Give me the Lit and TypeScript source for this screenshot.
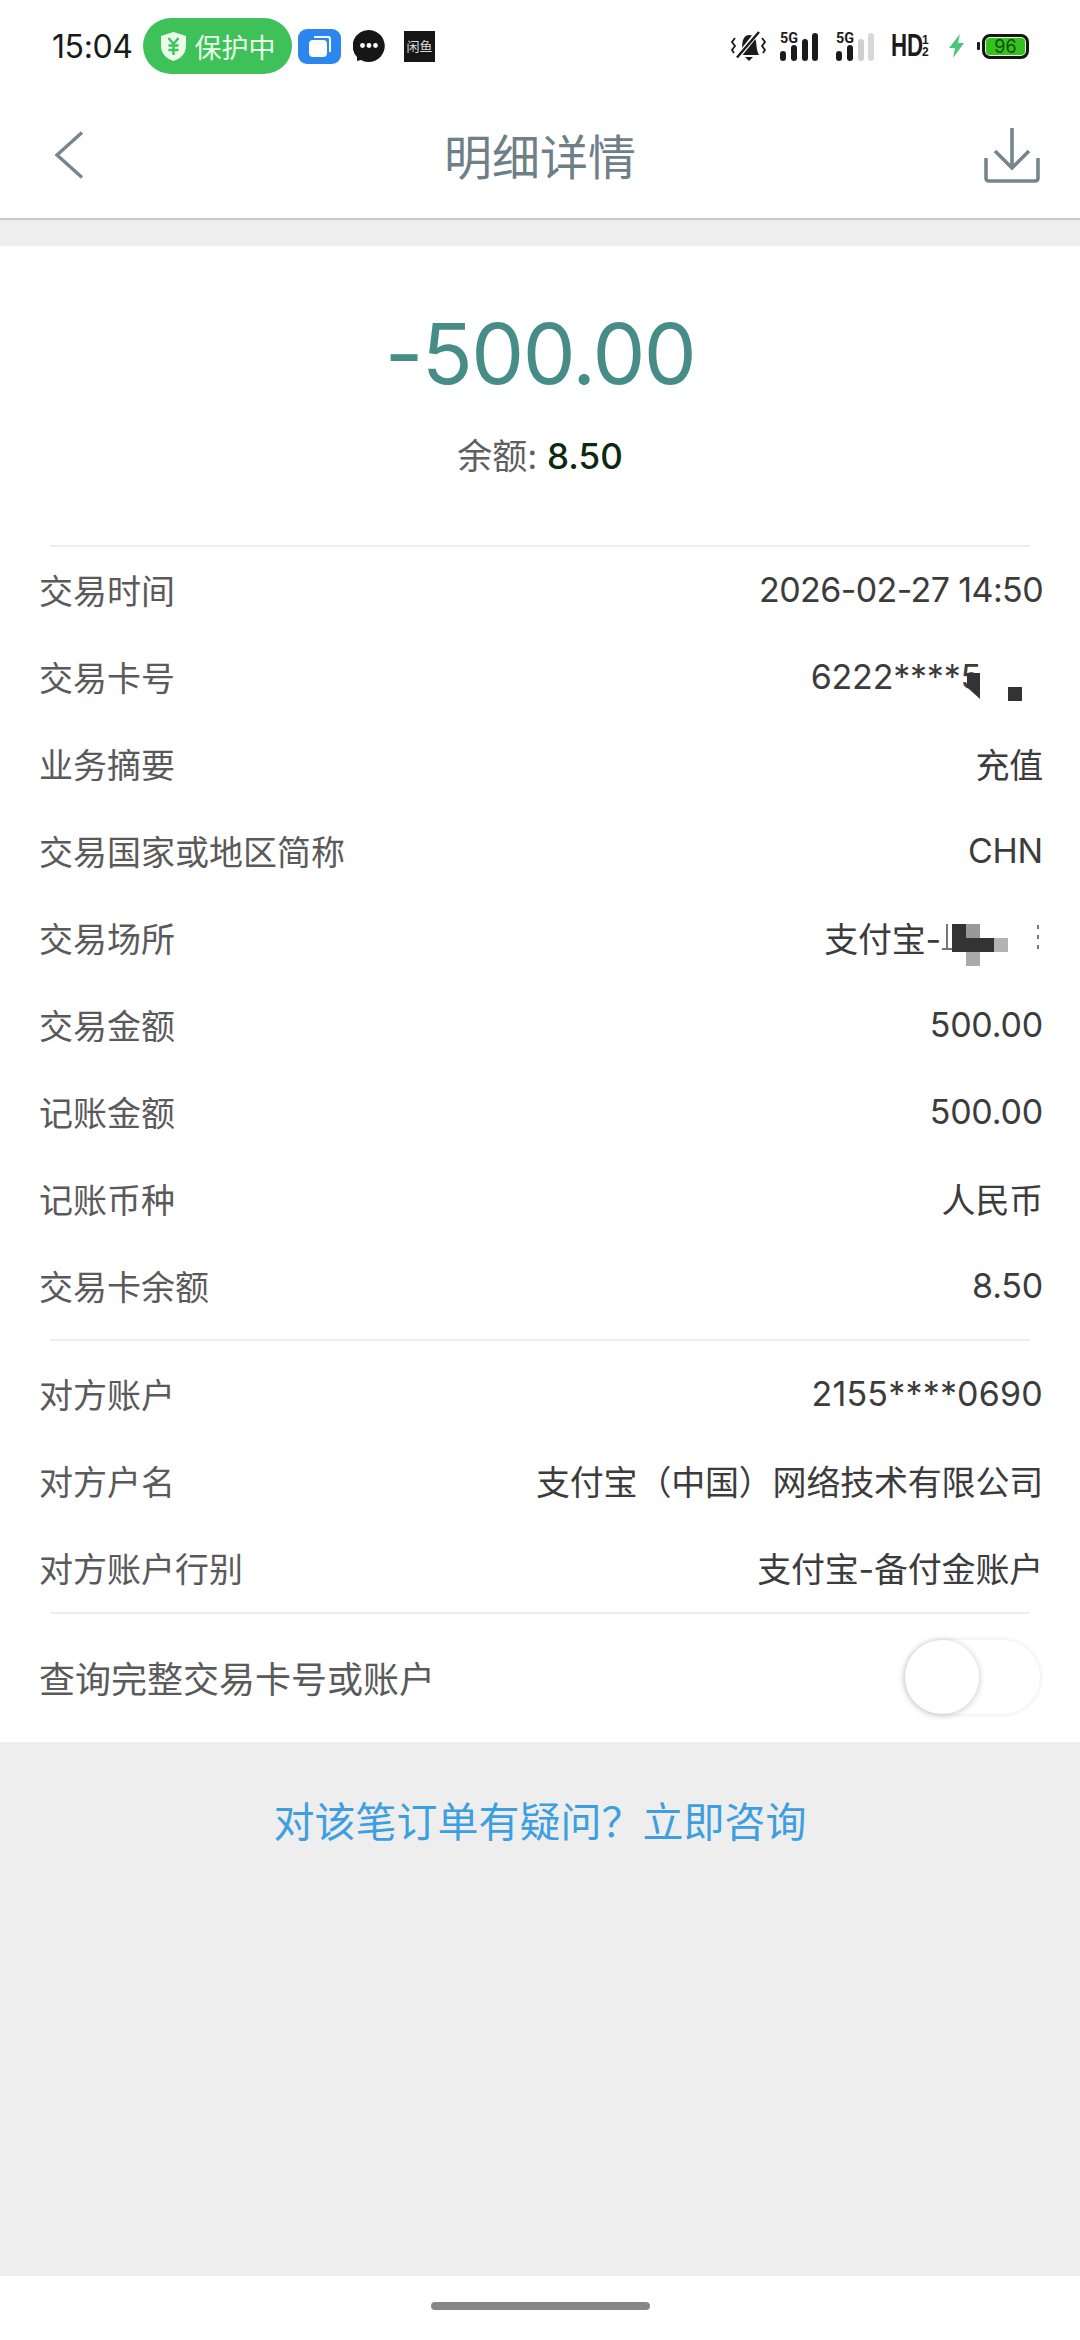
import { LitElement, html, css, svg } from "lit";
import { customElement } from "lit/decorators.js";

const rowsA: [string, string, string?][] = [
  ["交易时间", "2026-02-27 14:50", "date"],
  ["交易卡号", "6222****5", "card"],
  ["业务摘要", "充值"],
  ["交易国家或地区简称", "CHN"],
  ["交易场所", "支付宝-", "place"],
  ["交易金额", "500.00"],
  ["记账金额", "500.00"],
  ["记账币种", "人民币"],
  ["交易卡余额", "8.50"],
];
const rowsB: [string, string, string?][] = [
  ["对方账户", "2155****0690", "acct"],
  ["对方户名", "支付宝（中国）网络技术有限公司"],
  ["对方账户行别", "支付宝-备付金账户"],
];

const signal = (active: number, w: number) => svg`
  <svg class="sig" viewBox="0 0 40 30" width="${w}" height="30">
    <text x="1" y="12" font-size="14" font-weight="700" textLength="18" lengthAdjust="spacingAndGlyphs" font-family="Roboto, sans-serif" fill="#1b1b1b">5G</text>
    <rect x="1" y="20" width="6" height="10" rx="3" fill="#1b1b1b"/>
    <rect x="12" y="14" width="6" height="16" rx="3" fill="#1b1b1b"/>
    <rect x="23" y="8" width="6" height="22" rx="3" fill="${active > 2 ? "#1b1b1b" : "#cfcfcf"}"/>
    <rect x="33" y="2" width="6" height="28" rx="3" fill="${active > 3 ? "#1b1b1b" : "#d8d8d8"}"/>
  </svg>`;

@customElement("app-root")
export class AppRoot extends LitElement {
  static styles = css`
    :host {
      display: flex;
      flex-direction: column;
      width: 1080px;
      height: 2340px;
      background: #fff;
      font-family: Inter, "Noto Sans CJK SC", sans-serif;
      overflow: hidden;
    }
    .status {
      height: 92px;
      flex: none;
      display: flex;
      align-items: center;
      padding: 0 51px 0 52px;
      box-sizing: border-box;
    }
    .time { font-size: 32px; color: #1a1a1a; width: 91px; flex: none; white-space: nowrap; letter-spacing: -0.4px; }
    .pill {
      width: 149px; height: 56px; border-radius: 28px; background: #3fc15a; flex: none;
      display: flex; align-items: center; justify-content: center; gap: 8px;
      color: #e9fbe9; font-size: 27px;
    }
    .blue { margin-left: 6px; display: block; flex: none; }
    .msg { margin-left: 12px; display: block; flex: none; }
    .xy {
      margin-left: 19px; width: 31px; height: 31px; background: #161616; color: #ddd; flex: none;
      font-size: 13px; line-height: 31px; text-align: center; white-space: nowrap; overflow: hidden;
    }
    .spacer { flex: 1; }
    .right { display: flex; align-items: center; }
    .right svg { display: block; flex: none; }
    .hd {
      display: flex; align-items: center; width: 41px; color: #1b1b1b; margin-left: 16px; flex: none;
      font-family: "Liberation Sans", sans-serif; font-weight: 700;
    }
    .hd b { font-size: 31px; font-weight: 700; transform: scaleX(.72); transform-origin: left; width: 31px; display: block; }
    .frac { display: flex; flex-direction: column; font-size: 12px; line-height: 12px; align-items: center; }
    .batt { display: flex; align-items: center; gap: 2px; margin-left: 12px; }
    .nub { width: 3px; height: 8px; background: #1b1b1b; border-radius: 1px; }
    .cell {
      border: 3px solid #161616; border-radius: 8px; background: #35c21f;
      color: #124c12; font-size: 18px; text-align: center; box-sizing: content-box;
      width: 41px; height: 19px; line-height: 19px; box-shadow: inset 0 0 0 1px #e8ffe0;
    }
    .nav {
      height: 128px; flex: none; display: flex; align-items: center; justify-content: space-between;
      padding: 0 40px 0 53px; border-bottom: 2px solid #c2cecd; box-sizing: border-box;
      position: relative;
    }
    .nav .title { position: absolute; left: 0; right: 0; text-align: center; font-size: 48px; color: #6f7f87; padding-bottom: 3px; }
    .nav svg { display: block; position: relative; }
    .gapbar { height: 26px; flex: none; background: #eeeeee; }
    .hero { height: 299px; flex: none; display: flex; flex-direction: column; align-items: center; box-sizing: border-box; padding-top: 53px; }
    .amount { font-size: 84px; line-height: 110px; color: #468d87; font-weight: 400; letter-spacing: -1.6px; }
    .bal { margin-top: 24px; font-size: 35px; line-height: 46px; color: #5f5f5f; }
    .bal b { font-weight: 500; color: #0c2a10; }
    .div { height: 2px; margin: 0 50px; background: #ededed; flex: none; }
    .list { flex: none; }
    .a { margin-bottom: 9px; }
    .b { margin-top: 10px; }
    .row {
      height: 87px; display: flex; justify-content: space-between; align-items: center; box-sizing: border-box;
      padding: 0 37px 3px 39px; font-size: 34px; position: relative;
    }
    .row .l { color: #5a5a5a; }
    .row .v { color: #3c3c3c; letter-spacing: -0.2px; }
    .row .date { letter-spacing: -0.6px; }
    .row .acct { letter-spacing: 0.2px; }
    .row .card { padding-right: 62px; }
    .row .place { padding-right: 102px; }
    .block { position: absolute; background: #333; }
    .tri { clip-path: polygon(0 0, 100% 0, 100% 100%, 0 55%); }
    .dots { background: repeating-linear-gradient(#777 0 4px, transparent 4px 10px); }
    .toggleRow {
      height: 128px; flex: none; display: flex; justify-content: space-between; align-items: center;
      padding: 0 40px 3px 39px; font-size: 36px; color: #5a5a5a; box-sizing: border-box;
    }
    .toggle {
      width: 135px; height: 74px; position: relative; box-sizing: border-box;
      border-radius: 38px; box-shadow: 0 0 4px 1px rgba(0,0,0,.08);
    }
    .knob {
      position: absolute; left: 0; top: 0; width: 74px; height: 74px; border-radius: 50%;
      background: #fff; box-shadow: 0 1px 6px 1px rgba(0,0,0,.18);
    }
    .grayArea {
      flex: 1; background: #eeeeee; text-align: center; padding-top: 51px;
      font-size: 41px; line-height: 58px; color: #3d9fdf;
    }
    .home { height: 64px; flex: none; display: flex; justify-content: center; align-items: center; }
    .home i { display: block; width: 219px; height: 8px; border-radius: 4px; background: #878787; margin-top: -4px; }
  `;

  private row(l: string, v: string, k?: string) {
    return html`<div class="row">
      <span class="l">${l}</span>
      <span class="v ${k ?? ""}">${v}</span>
      ${k === "card"
        ? html`<i class="block tri" style="left:967px;top:39px;width:13px;height:26px"></i>
            <i class="block" style="left:1008px;top:53px;width:14px;height:14px"></i>`
        : ""}
      ${k === "place"
        ? html`<i class="block" style="left:946px;top:29px;width:2px;height:26px;background:#777"></i>
            <i class="block" style="left:942px;top:53px;width:10px;height:2px;background:#777"></i>
            <i class="block" style="left:952px;top:29px;width:14px;height:28px"></i>
            <i class="block" style="left:966px;top:29px;width:14px;height:14px;background:#999"></i>
            <i class="block" style="left:966px;top:43px;width:28px;height:14px"></i>
            <i class="block" style="left:994px;top:43px;width:14px;height:14px;background:#b3b3b3"></i>
            <i class="block" style="left:966px;top:57px;width:14px;height:14px;background:#aaa"></i>
            <i class="block dots" style="left:1037px;top:30px;width:2px;height:26px"></i>`
        : ""}
    </div>`;
  }

  render() {
    return html`
      <div class="status">
        <span class="time">15:04</span>
        <div class="pill">
          <svg width="27" height="31" viewBox="0 0 27 31">
            <path d="M13.5 1 L26 5 V15 C26 23 20 28 13.5 30 C7 28 1 23 1 15 V5 Z" fill="#eafbea"/>
            <path d="M8.5 7 L13.5 13 L18.5 7 M8.5 14.5 H18.5 M8.5 19 H18.5 M13.5 13 V24" fill="none" stroke="#3fc15a" stroke-width="2.4"/>
          </svg>
          <span>保护中</span>
        </div>
        <svg class="blue" width="43" height="35" viewBox="0 0 43 35">
          <rect width="43" height="35" rx="9" fill="#2b87ee"/>
          <path d="M16 8 H30 Q32 8 32 10 V23" fill="none" stroke="#fff" stroke-width="2"/>
          <rect x="11" y="11" width="18" height="17" rx="4" fill="#fff"/>
        </svg>
        <svg class="msg" width="32" height="32" viewBox="0 0 32 32">
          <path d="M16 0 A16 16 0 1 1 8 30 L4 31 L4 27 A16 16 0 0 1 16 0 Z" fill="#161616"/>
          <circle cx="9.5" cy="15.5" r="2.4" fill="#fff"/><circle cx="16" cy="15.5" r="2.4" fill="#fff"/><circle cx="22.5" cy="15.5" r="2.4" fill="#fff"/>
        </svg>
        <div class="xy">闲鱼</div>
        <div class="spacer"></div>
        <div class="right">
          <svg width="35" height="31" viewBox="0 0 35 31">
            <path d="M10 24 C12 19 10 12 13 7 C15 3 21 3 24 7 C26 12 25 19 28 24 Z" fill="#1b1b1b"/>
            <path d="M14 26 H22 L18 30 Z" fill="#1b1b1b"/>
            <path d="M6 27 L27 1" stroke="#fff" stroke-width="5"/>
            <path d="M6 26.5 L28 1" stroke="#1b1b1b" stroke-width="2.4"/>
            <path d="M4 7 L1 11 L4 15 L1 19 L3 22 M31 7 L34 11 L31 15 L34 19 L32 22" fill="none" stroke="#1b1b1b" stroke-width="1.8"/>
          </svg>
          <div style="width:13px"></div>
          ${signal(4, 40)}
          <div style="width:16px"></div>
          ${signal(2, 40)}
          <div class="hd">
            <b>HD</b>
            <span class="frac"><span>1</span><span>2</span></span>
          </div>
          <svg style="margin-left:16px" width="17" height="24" viewBox="0 0 17 24"><path d="M12 0 L1 14 H7 L5 24 L16 9 H10 Z" fill="#4cc47a"/></svg>
          <div class="batt"><span class="nub"></span><div class="cell">96</div></div>
        </div>
      </div>

      <div class="nav">
        <svg width="32" height="48" viewBox="0 0 32 48">
          <path d="M29 1.5 L4 24 L29 46.5" fill="none" stroke="#76868d" stroke-width="3.4"/>
        </svg>
        <span class="title">明细详情</span>
        <svg width="56" height="56" viewBox="0 0 56 56">
          <path d="M28 1 V40 M11 24 L28 41 L45 24" fill="none" stroke="#76868d" stroke-width="3.6"/>
          <path d="M2 31 V51 Q2 54 5 54 H51 Q54 54 54 51 V31" fill="none" stroke="#76868d" stroke-width="3.6"/>
        </svg>
      </div>
      <div class="gapbar"></div>

      <div class="hero">
        <div class="amount">-500.00</div>
        <div class="bal">余额: <b>8.50</b></div>
      </div>
      <div class="div"></div>
      <div class="list a">
        ${rowsA.map(([l, v, k]) => this.row(l, v, k))}
      </div>
      <div class="div"></div>
      <div class="list b">
        ${rowsB.map(([l, v, k]) => this.row(l, v, k))}
      </div>
      <div class="div"></div>
      <div class="toggleRow">
        <span>查询完整交易卡号或账户</span>
        <div class="toggle"><div class="knob"></div></div>
      </div>
      <div class="grayArea">对该笔订单有疑问？立即咨询</div>
      <div class="home"><i></i></div>
    `;
  }
}
